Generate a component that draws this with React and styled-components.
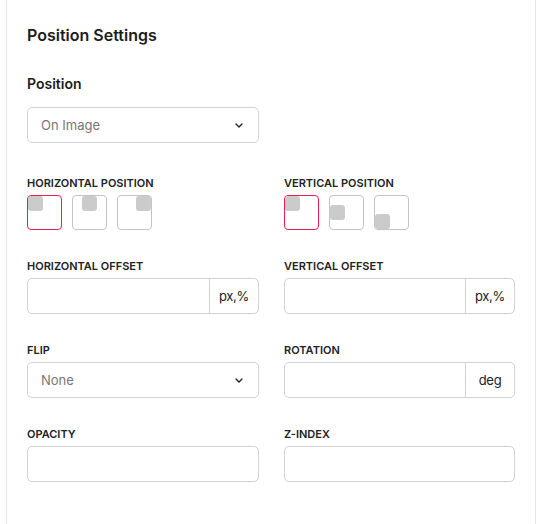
import React from "react";
import styled, { createGlobalStyle } from "styled-components";

const Global = createGlobalStyle`
  html, body { margin: 0; padding: 0; background: #ffffff; }
  body { font-family: Inter, "Noto Sans", sans-serif; color: #1f1f1f; }
  * { box-sizing: border-box; }
`;

const Panel = styled.div`
  margin-left: 6px;
  width: 530px;
  min-height: 524px;
  border-left: 1px solid #e6e6e6;
  border-right: 1px solid #e6e6e6;
  padding: 24px 20px 0 20px;
`;

const Heading = styled.h2`
  margin: 0 0 28px;
  font-size: 16px;
  line-height: 22px;
  font-weight: 600;
  color: #1c1c1c;
`;

const SectionLabel = styled.div`
  font-size: 14px;
  line-height: 20px;
  font-weight: 600;
  color: #1c1c1c;
  margin-bottom: 13px;
`;

const FieldBox = styled.div`
  height: 36px;
  border: 1px solid #d2d2d2;
  border-radius: 5px;
  display: flex;
  align-items: stretch;
  background: #fff;
  overflow: hidden;
`;

const SelectBox = styled(FieldBox)`
  width: 232px;
  align-items: center;
  justify-content: space-between;
  padding: 0 15px 0 13px;
  font-size: 13px;
  color: #777;
  margin-bottom: ${(p) => p.$mb || 0}px;
`;

const Grid = styled.div`
  display: grid;
  grid-template-columns: 232px 231px;
  column-gap: 25px;
  row-gap: 29px;
`;

const Field = styled.div`
  display: flex;
  flex-direction: column;
`;

const Label = styled.div`
  font-size: 11px;
  line-height: 14px;
  font-weight: 600;
  letter-spacing: 0;
  text-transform: uppercase;
  color: #222;
  margin-bottom: 5px;
`;

const Choices = styled.div`
  display: flex;
  gap: 10px;
`;

const hPos = { left: "flex-start", center: "center", right: "flex-end" };
const vPos = { top: "flex-start", middle: "center", bottom: "flex-end" };

const Choice = styled.div`
  width: 35px;
  height: 35px;
  border-radius: 4px;
  border: 1px solid ${(p) => (p.$active ? "#e8204f" : "#c4c4c4")};
  display: flex;
  justify-content: ${(p) => hPos[p.$h]};
  align-items: ${(p) => vPos[p.$v]};
  overflow: hidden;
`;

const Dot = styled.span`
  width: 15px;
  height: 15px;
  border-radius: 3px;
  background: #cbcbcb;
`;

const InputArea = styled.div`
  flex: 1;
`;

const Unit = styled.div`
  width: 49px;
  border-left: 1px solid #d2d2d2;
  display: flex;
  align-items: center;
  justify-content: center;
  font-size: 13px;
  letter-spacing: -0.3px;
  color: #222;
`;

const Chevron = () => (
  <svg width="8" height="5" viewBox="0 0 8 5" fill="none">
    <path d="M1 1 L4 4 L7 1" stroke="#222" strokeWidth="1.4" strokeLinecap="round" strokeLinejoin="round" />
  </svg>
);

const Select = ({ value, mb }) => (
  <SelectBox $mb={mb}>
    <span>{value}</span>
    <Chevron />
  </SelectBox>
);

const Input = ({ unit }) => (
  <FieldBox>
    <InputArea />
    {unit && <Unit>{unit}</Unit>}
  </FieldBox>
);

export default function App() {
  return (
    <>
      <Global />
      <Panel>
        <Heading>Position Settings</Heading>
        <SectionLabel>Position</SectionLabel>
        <Select value="On Image" mb={33} />
        <Grid>
          <Field>
            <Label>Horizontal Position</Label>
            <Choices>
              <Choice $active $h="left" $v="top"><Dot /></Choice>
              <Choice $h="center" $v="top"><Dot /></Choice>
              <Choice $h="right" $v="top"><Dot /></Choice>
            </Choices>
          </Field>
          <Field>
            <Label>Vertical Position</Label>
            <Choices>
              <Choice $active $h="left" $v="top"><Dot /></Choice>
              <Choice $h="left" $v="middle"><Dot /></Choice>
              <Choice $h="left" $v="bottom"><Dot /></Choice>
            </Choices>
          </Field>
          <Field>
            <Label>Horizontal Offset</Label>
            <Input unit="px,%" />
          </Field>
          <Field>
            <Label>Vertical Offset</Label>
            <Input unit="px,%" />
          </Field>
          <Field>
            <Label>Flip</Label>
            <Select value="None" />
          </Field>
          <Field>
            <Label>Rotation</Label>
            <Input unit="deg" />
          </Field>
          <Field>
            <Label>Opacity</Label>
            <Input />
          </Field>
          <Field>
            <Label>Z-Index</Label>
            <Input />
          </Field>
        </Grid>
      </Panel>
    </>
  );
}
